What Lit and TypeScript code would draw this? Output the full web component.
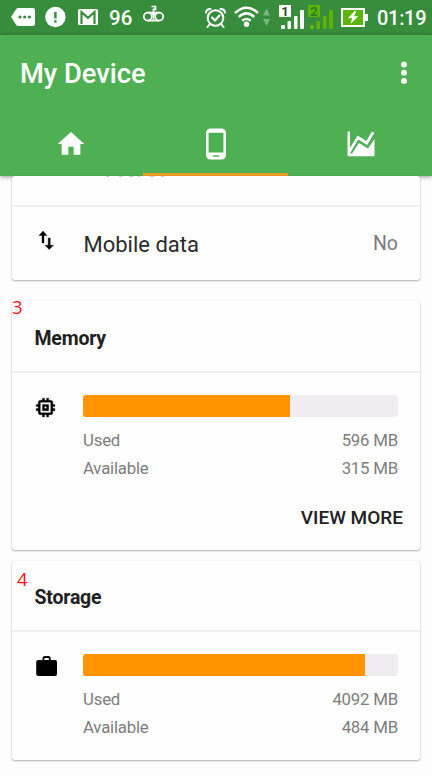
import { LitElement, html, css, svg, nothing } from "lit";
import { customElement, property } from "lit/decorators.js";

const glyph = (x: number, width: number, body: unknown) => html`
  <svg width=${width} height="35" viewBox="${x} 0 ${width} 35">${body}</svg>
`;

const signal = (x: number) => svg`
  <rect x=${x + 2} y="25" width="4" height="4" rx="1"></rect>
  <rect x=${x + 8.5} y="21" width="3.5" height="8" rx="1"></rect>
  <rect x=${x + 15} y="16" width="3.5" height="13" rx="1"></rect>
  <rect x=${x + 21} y="10" width="4" height="19" rx="1"></rect>
`;

@customElement("status-bar")
export class StatusBar extends LitElement {
  static styles = css`
    :host {
      display: flex;
      height: 35px;
      padding: 0 7px 0 11px;
      box-sizing: border-box;
      background: #388d3d;
      color: #fff;
      font: 500 20px/35px Roboto, sans-serif;
    }
    svg { display: block; fill: #fff; flex: none; }
    .left, .right { display: flex; }
    .left { gap: 10px; }
    .left .gmail { margin-left: 2px; }
    .right { margin-left: auto; }
    .count { width: 24px; margin-left: 1px; font-size: 20.500px; line-height: 36px; }
    .alarm { margin-right: 8px; }
    .wifi { margin-right: 4px; }
    .traffic { margin-right: 9px; }
    .sim { margin-right: 4px; position: relative; }
    .sim.second { margin-right: 8px; }
    .num {
      position: absolute;
      left: 0;
      top: 5px;
      width: 12px;
      height: 12px;
      font: 700 13px/13px Roboto, sans-serif;
      text-align: center;
      background: #fff;
      color: #2c4a2e;
    }
    .second .num { background: #5cb404; color: #2f7a24; }
    .clock { margin-left: 9px; width: 48px; white-space: nowrap; line-height: 36px; letter-spacing: -0.300px; }
  `;

  render() {
    return html`
      <div class="left">
        ${glyph(11, 24, svg`
          <path d="M18 8H33Q35 8 35 10V24Q35 26 33 26H18Q17 26 16.3 25L11 17L16.3 9Q17 8 18 8Z"></path>
          <g fill="#388d3d"><circle cx="20" cy="17" r="1.6"></circle><circle cx="24.700" cy="17" r="1.6"></circle><circle cx="29.400" cy="17" r="1.6"></circle></g>`)}
        ${glyph(45, 21, svg`
          <circle cx="55.400" cy="17" r="10.200"></circle>
          <path fill="#388d3d" d="M54.200 12h2.400v6.500h-2.400zM54.200 20.300h2.400v2.400h-2.400z"></path>`)}
        <div class="gmail">${glyph(78, 20, svg`
          <rect x="78" y="9" width="20" height="16" rx="1.500"></rect>
          <path d="M81.500 24V12.200L88 17.800L94.500 12.200V24" fill="none" stroke="#388d3d" stroke-width="2.200"></path>`)}</div>
        <span class="count">96</span>
        ${glyph(143, 21, svg`
          <g fill="none" stroke="#fff" stroke-width="1.700">
            <circle cx="147.800" cy="16.600" r="4"></circle><circle cx="159.200" cy="16.600" r="4"></circle>
            <path d="M148 12.500H159M153.500 12.500V9.400H155.500V6.500H151.500M153.500 14V19.500M151.500 14.200H155.500M148 20.700H159"></path>
          </g>`)}
      </div>
      <div class="right">
        <div class="alarm">${glyph(205, 21, svg`
          <g fill="none" stroke="#fff" stroke-width="2" stroke-linecap="round">
            <circle cx="215.500" cy="18" r="7.800"></circle>
            <path d="M206 12.500Q206.500 9 210.500 9M225 12.500Q224.500 9 220.500 9M209.500 24.500L207.500 27M221.500 24.500L223.500 27M212 17.500L215 20.500L219.500 15.500"></path>
          </g>`)}</div>
        <div class="wifi">${glyph(234, 25, svg`
          <g fill="none" stroke="#fff" stroke-width="2.500">
            <path d="M235 13Q246.500 2.500 258 13M238.700 17Q246.500 9.800 254.300 17M242.300 20.800Q246.500 17.200 250.700 20.800"></path>
          </g><circle cx="246.500" cy="24.200" r="2.700"></circle>`)}</div>
        <div class="traffic">${glyph(263, 7, svg`<path fill="#7cb67e" d="M263 15.500L266.500 8.500L270 15.500ZM263 19L266.500 26L270 19Z"></path>`)}</div>
        <div class="sim">${glyph(279, 25, signal(279))}<span class="num">1</span></div>
        <div class="sim second">${glyph(308, 25, svg`<g fill="#5cb404">${signal(308)}</g>`)}<span class="num">2</span></div>
        ${glyph(341, 27, svg`
          <path d="M341 8H365V14H368V21H365V27H341Z"></path>
          <rect x="343" y="10" width="20" height="15" fill="#5cb404"></rect>
          <path d="M354.500 11L348 18.300L352.200 18.300L350.500 24L358.300 16.200L354 16.200L356.500 11Z"></path>`)}
        <span class="clock">01:19</span>
      </div>
    `;
  }
}

@customElement("app-header")
export class AppHeader extends LitElement {
  static styles = css`
    :host {
      display: block;
      background: #4faf53;
      position: relative;
      box-shadow: 0 1px 4px rgba(0, 0, 0, 0.4);
    }
    .bar {
      display: flex;
      align-items: center;
      justify-content: space-between;
      height: 76px;
      padding: 0 25px 0 20px;
    }
    .title { font: 500 27.300px/36px Roboto, sans-serif; color: #fff; padding-top: 1px; }
    svg { display: block; fill: #fff; }
    .tabs { display: grid; grid-template-columns: 143px 145px 1fr; height: 65px; }
    .tab { display: flex; justify-content: center; align-items: flex-start; box-sizing: border-box; }
    .tab.active { border-bottom: 3px solid #eb9c25; }
    .home { margin: 17px 1px 0 0; }
    .phone { margin-top: 16px; }
    .chart { margin: 20px 0 0 2px; }
  `;

  render() {
    return html`
      <div class="bar">
        <span class="title">My Device</span>
        <svg width="6" height="24" viewBox="0 0 6 24"><circle cx="3" cy="3.500" r="2.900"></circle><circle cx="3" cy="11.700" r="2.900"></circle><circle cx="3" cy="19.900" r="2.900"></circle></svg>
      </div>
      <div class="tabs">
        <div class="tab"><svg class="home" width="32" height="32" viewBox="0 0 24 24"><path d="M10 20v-6h4v6h5v-8h3L12 3 2 12h3v8z"></path></svg></div>
        <div class="tab active"><svg class="phone" width="34" height="34" viewBox="0 0 24 24"><path d="M16 1H8C6.340 1 5 2.340 5 4v16c0 1.660 1.340 3 3 3h8c1.660 0 3-1.340 3-3V4c0-1.660-1.340-3-3-3zm-2 20h-4v-1h4v1zm3.250-3H6.750V4h10.500v14z"></path></svg></div>
        <div class="tab"><svg class="chart" width="28" height="26" viewBox="0 0 28 26">
          <path d="M0.500 0.500H3V17L10.500 4.500L19.300 10L25 0.500L27.300 2L20.200 14L11.300 8.400L3 22.300L5 22.500L12 12L21 17.500L27.500 8V25.300H0.500Z"></path></svg></div>
      </div>
    `;
  }
}

@customElement("info-card")
export class InfoCard extends LitElement {
  @property() heading = "";
  @property() marker = "";

  static styles = css`
    :host {
      display: block;
      position: relative;
      margin: 0 12px;
      background: #fefefe;
      border-radius: 3px;
      box-shadow: 0 1px 2px rgba(0, 0, 0, 0.3), 0 0 1px rgba(0, 0, 0, 0.15);
      font-family: Roboto, sans-serif;
    }
    .heading {
      height: 70px;
      padding-left: 22.500px;
      font-weight: 700;
      font-size: 19.500px;
      line-height: 75px;
      letter-spacing: -0.200px;
      color: #212121;
      border-bottom: 2px solid #f0f0f1;
    }
    :host([marker="4"]) .heading { height: 69px; line-height: 73px; }
    .marker {
      position: absolute;
      left: 0;
      top: -6px;
      color: #f5121b;
      font: 18.500px/24px "Open Sans", sans-serif;
    }
    :host([marker="4"]) .marker { left: 5px; top: 6px; }
  `;

  render() {
    return html`
      ${this.heading ? html`<div class="heading">${this.heading}</div>` : nothing}
      ${this.marker ? html`<span class="marker">${this.marker}</span>` : nothing}
      <slot></slot>
    `;
  }
}

@customElement("usage-meter")
export class UsageMeter extends LitElement {
  @property() used = "";
  @property() available = "";
  @property({ type: Number }) percent = 0;

  static styles = css`
    :host {
      display: grid;
      grid-template-columns: 71px 1fr;
      padding: 22px 22px 0 0;
      font: 16.800px/28px Roboto, sans-serif;
      letter-spacing: -0.200px;
      color: #7d7d7d;
    }
    .icon { padding: 0 0 0 20px; }
    .track { height: 22px; border-radius: 3px; background: #efedf0; overflow: hidden; margin-bottom: 9px; }
    .fill { height: 100%; background: #ff9300; }
    .line { display: flex; justify-content: space-between; }
  `;

  render() {
    return html`
      <div class="icon"><slot></slot></div>
      <div>
        <div class="track"><div class="fill" style="width:${this.percent}%"></div></div>
        <div class="line"><span>Used</span><span>${this.used}</span></div>
        <div class="line"><span>Available</span><span>${this.available}</span></div>
      </div>
    `;
  }
}

@customElement("app-root")
export class AppRoot extends LitElement {
  static styles = css`
    :host {
      display: block;
      height: 776px;
      overflow: hidden;
      background: #fdfdfd;
      font-family: Roboto, sans-serif;
    }
    svg { display: block; }
    .network { height: 104px; margin-bottom: 21px; }
    .memory { height: 249px; margin-bottom: 11px; }
    .storage { height: 199px; }
    .previous { height: 29px; border-bottom: 2px solid #f0f0f0; }
    .previous svg { margin-left: 94px; }
    .row { display: flex; align-items: flex-start; height: 73px; }
    .row svg { margin: 23px 0 0 26px; width: 18px; }
    .name { margin: 22px 0 0 27.500px; font-size: 22px; line-height: 32px; color: #2a2a2a; }
    .value { margin: 21px 22px 0 auto; font-size: 19.500px; line-height: 32px; color: #7a7a7a; }
    .more { text-align: right; margin: 22px 17px 0 0; font-size: 19px; font-weight: 500; line-height: 28px; color: #212121; }
  `;

  render() {
    return html`
      <status-bar></status-bar>
      <app-header></app-header>
      <info-card class="network">
        <div class="previous">
          <svg width="60" height="1" viewBox="0 0 60 1"><path d="M0 .5h3M13 .5h3M23 .5h4M32 .5h2M44 .5h4M55 .5h3" stroke="#777" stroke-opacity="0.4"></path></svg>
        </div>
        <div class="row">
          <svg width="18" height="22" viewBox="0 0 18 22"><path d="M5 1L9 5.500H6V13H4V5.500H1ZM10.200 8H12.200V15.200H15.500L11.200 19.500L7 15.200H10.200Z" stroke="#111" stroke-width="0.400"></path></svg>
          <span class="name">Mobile data</span>
          <span class="value">No</span>
        </div>
      </info-card>
      <info-card class="memory" heading="Memory" marker="3">
        <usage-meter used="596 MB" available="315 MB" percent="65.600">
          <svg width="25" height="25" viewBox="-1 0 24 24"><path d="M15 9H9v6h6V9zm-2 4h-2v-2h2v2zm8-2V9h-2V7c0-1.100-.9-2-2-2h-2V3h-2v2h-2V3H9v2H7c-1.100 0-2 .9-2 2v2H3v2h2v2H3v2h2v2c0 1.100.9 2 2 2h2v2h2v-2h2v2h2v-2h2c1.100 0 2-.9 2-2v-2h2v-2h-2v-2h2zm-4 6H7V7h10v10z" stroke="#000" stroke-width="0.300"></path></svg>
        </usage-meter>
        <div class="more">VIEW MORE</div>
      </info-card>
      <info-card class="storage" heading="Storage" marker="4">
        <usage-meter used="4092 MB" available="484 MB" percent="89.500">
          <svg width="29" height="25" viewBox="0 0 29 25"><path fill-rule="evenodd" d="M6.500 6H10.500V4.500Q10.500 2 13 2H16.200Q18.700 2 18.700 4.500V6H23Q25 6 25 8V20Q25 22 23 22H6.500Q4.200 22 4.200 20V8Q4.200 6 6.500 6ZM12.300 6H16.900V4.800Q16.900 4 16 4H13.200Q12.300 4 12.300 4.800Z"></path></svg>
        </usage-meter>
      </info-card>
    `;
  }
}
